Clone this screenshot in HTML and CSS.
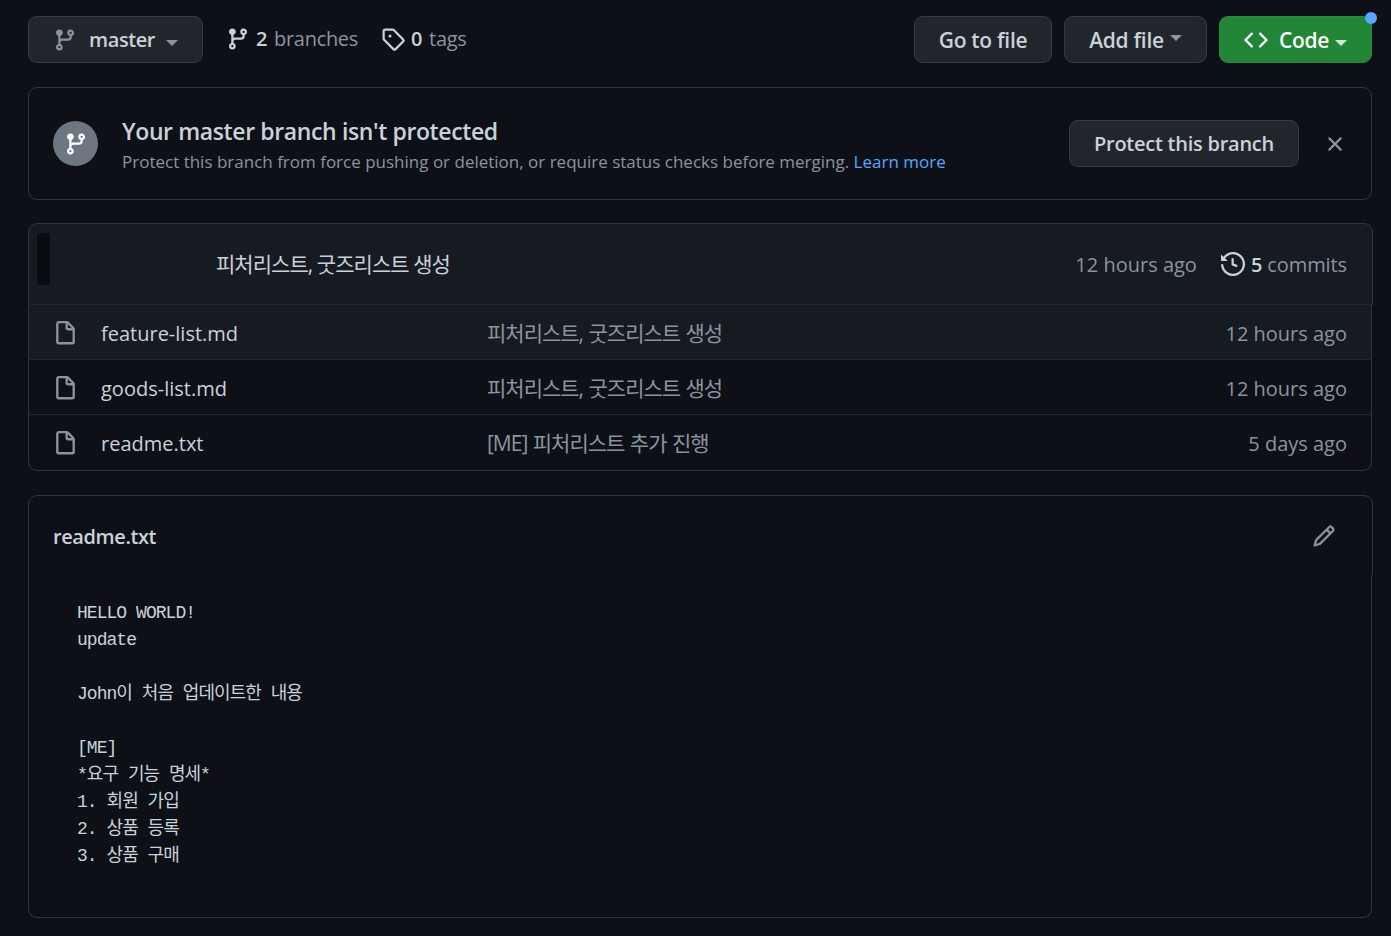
FILE: index.html
```html
<!DOCTYPE html>
<html lang="ko">
<head>
<meta charset="UTF-8">
<meta name="viewport" content="width=device-width, initial-scale=1.0">
<title>readme</title>
<link rel="stylesheet" href="styles.css">
</head>
<body>

<!-- ICONS -->
<svg class="defs">
    <symbol id="i-branch" viewBox="0 0 16 16"><path d="M11.75 2.5a.75.75 0 100 1.5.75.75 0 000-1.5zm-2.25.75a2.25 2.25 0 113 2.122V6A2.5 2.5 0 0110 8.5H6a1 1 0 00-1 1v1.128a2.251 2.251 0 11-1.5 0V5.372a2.25 2.25 0 111.5 0v1.836A2.492 2.492 0 016 7h4a1 1 0 001-1v-.628A2.25 2.25 0 019.5 3.25zM4.25 12a.75.75 0 100 1.5.75.75 0 000-1.5zM3.5 3.25a.75.75 0 111.5 0 .75.75 0 01-1.5 0z"/></symbol>
    <symbol id="i-file" viewBox="0 0 16 16"><path d="M3.75 1.5a.25.25 0 00-.25.25v11.5c0 .138.112.25.25.25h8.5a.25.25 0 00.25-.25V6H9.75A1.75 1.75 0 018 4.25V1.5H3.75zm5.75.56v2.19c0 .138.112.25.25.25h2.19L9.5 2.06zM2 1.75C2 .784 2.784 0 3.75 0h5.086c.464 0 .909.184 1.237.513l3.414 3.414c.329.328.513.773.513 1.237v8.086A1.75 1.75 0 0112.25 15h-8.5A1.75 1.75 0 012 13.25V1.75z"/></symbol>
</svg>

<!-- TOP BAR -->
<div class="topbar">
    <button class="btn btn-branch">
        <svg class="icon muted-icon"><use href="#i-branch"/></svg>
        <span>master</span>
        <i class="caret"></i>
    </button>
    <a class="meta-link">
        <svg class="icon light-icon"><use href="#i-branch"/></svg>
        <span><b>2</b> branches</span>
    </a>
    <a class="meta-link">
        <svg class="icon light-icon" viewBox="0 0 16 16"><path fill-rule="evenodd" d="M2.5 7.775V2.75a.25.25 0 01.25-.25h5.025a.25.25 0 01.177.073l6.25 6.25a.25.25 0 010 .354l-5.025 5.025a.25.25 0 01-.354 0l-6.25-6.25a.25.25 0 01-.073-.177zm-1.5 0V2.75C1 1.784 1.784 1 2.75 1h5.025c.464 0 .91.184 1.238.513l6.25 6.25a1.75 1.75 0 010 2.474l-5.026 5.026a1.75 1.75 0 01-2.474 0l-6.25-6.25A1.75 1.75 0 011 7.775zM6 5a1 1 0 100 2 1 1 0 000-2z"/></svg>
        <span><b>0</b> tags</span>
    </a>
    <div class="spacer"></div>
    <button class="btn btn-goto">Go to file</button>
    <button class="btn btn-add">Add file <i class="caret caret-up"></i></button>
    <button class="btn btn-code">
        <svg class="icon" viewBox="0 0 16 16"><path d="M4.72 3.22a.75.75 0 011.06 1.06L2.06 8l3.72 3.72a.75.75 0 11-1.06 1.06L.47 8.53a.75.75 0 010-1.06l4.25-4.25zm6.56 0a.75.75 0 10-1.06 1.06L13.94 8l-3.72 3.72a.75.75 0 101.06 1.06l4.25-4.25a.75.75 0 000-1.06l-4.25-4.25z"/></svg>
        <span>Code</span>
        <i class="caret"></i>
        <i class="dot"></i>
    </button>
</div>

<!-- BANNER -->
<div class="banner">
    <div class="avatar"><svg class="icon"><use href="#i-branch"/></svg></div>
    <div class="banner-text">
        <h2>Your master branch isn't protected</h2>
        <p>Protect this branch from force pushing or deletion, or require status checks before merging. <a>Learn more</a></p>
    </div>
    <button class="btn btn-protect">Protect this branch</button>
    <svg class="icon close" viewBox="0 0 16 16"><path d="M3.72 3.72a.75.75 0 011.06 0L8 6.94l3.22-3.22a.75.75 0 111.06 1.06L9.06 8l3.22 3.22a.75.75 0 11-1.06 1.06L8 9.06l-3.22 3.22a.75.75 0 01-1.06-1.06L6.94 8 3.72 4.78a.75.75 0 010-1.06z"/></svg>
</div>

<!-- FILES -->
<div class="files">
    <div class="files-head">
        <div class="redacted"></div>
        <div class="commit-msg">피처리스트, 굿즈리스트 생성</div>
        <div class="commit-age">12 hours ago</div>
        <a class="commit-count">
            <svg class="icon" viewBox="0 0 16 16"><path d="M1.643 3.143L.427 1.927A.25.25 0 000 2.104V5.75c0 .138.112.25.25.25h3.646a.25.25 0 00.177-.427L2.715 4.215a6.5 6.5 0 11-1.18 4.458.75.75 0 10-1.493.154 8.001 8.001 0 101.6-5.684zM7.75 4a.75.75 0 01.75.75v2.992l2.028.812a.75.75 0 01-.557 1.392l-2.5-1A.75.75 0 017 8.25v-3.5A.75.75 0 017.75 4z"/></svg>
            <span><b>5</b> commits</span>
        </a>
    </div>
    <div class="files-body">
        <div class="row row-hover">
            <svg class="icon file-icon"><use href="#i-file"/></svg>
            <div class="name">feature-list.md</div>
            <div class="msg">피처리스트, 굿즈리스트 생성</div>
            <div class="age">12 hours ago</div>
        </div>
        <div class="row">
            <svg class="icon file-icon"><use href="#i-file"/></svg>
            <div class="name">goods-list.md</div>
            <div class="msg">피처리스트, 굿즈리스트 생성</div>
            <div class="age">12 hours ago</div>
        </div>
        <div class="row">
            <svg class="icon file-icon"><use href="#i-file"/></svg>
            <div class="name">readme.txt</div>
            <div class="msg">[ME] 피처리스트 추가 진행</div>
            <div class="age">5 days ago</div>
        </div>
    </div>
</div>

<!-- README -->
<div class="readme">
    <div class="readme-head">
        <h3>readme.txt</h3>
        <svg class="icon pencil" viewBox="0 0 16 16"><path d="M11.013 1.427a1.75 1.75 0 012.474 0l1.086 1.086a1.75 1.75 0 010 2.474l-8.61 8.61c-.21.21-.47.364-.756.445l-3.251.93a.75.75 0 01-.927-.928l.929-3.25a1.75 1.75 0 01.445-.758l8.61-8.61zm1.414 1.06a.25.25 0 00-.354 0L10.811 3.75l1.439 1.44 1.263-1.263a.25.25 0 000-.354l-1.086-1.086zM11.189 6.25L9.75 4.81l-6.286 6.287a.25.25 0 00-.064.108l-.558 1.953 1.953-.558a.249.249 0 00.108-.064l6.286-6.286z"/></svg>
    </div>
    <div class="readme-body">
<pre>HELLO WORLD!
update

John이 처음 업데이트한 내용

[ME]
*요구 기능 명세*
1. 회원 가입
2. 상품 등록
3. 상품 구매</pre>
    </div>
</div>

</body>
</html>
```

FILE: styles.css
```css
:root {
    --bg: #0d1117;
    --card: #161b22;
    --btn: #21262d;
    --line: #30363d;
    --text: #c9d1d9;
    --muted: #8b949e;
    --blue: #58a6ff;
    --green: #238636;
}
* { box-sizing: border-box; }
body {
    margin: 0;
    padding: 16px 19px 0 28px;
    background: var(--bg);
    color: var(--text);
    font-family: "Open Sans", "Noto Sans CJK KR", sans-serif;
    font-size: 20px;
    line-height: 1.5;
}
.defs { display: none; }
.icon { width: 24px; height: 24px; fill: currentColor; flex: none; }
.muted-icon { color: var(--muted); }
.light-icon { color: var(--text); }
b { font-weight: 600; color: var(--text); }

/* buttons */
.btn {
    display: flex;
    align-items: center;
    justify-content: center;
    height: 47px;
    padding: 2px 24px 0;
    background: var(--btn);
    border: 1px solid #363b42;
    border-radius: 9px;
    color: var(--text);
    font: inherit;
    font-size: 21px;
    font-weight: 600;
    letter-spacing: -0.3px;
}
.caret {
    display: inline-block;
    width: 0;
    height: 0;
    border: 6px solid transparent;
    border-top-color: var(--muted);
    border-bottom: 0;
}
.caret-up { margin: 0 0 6px 6px; }

/* top bar */
.topbar { display: flex; align-items: center; }
.btn-branch { width: 175px; gap: 12px; padding: 0 24px; justify-content: flex-start; font-size: 20px; letter-spacing: -0.4px; }
.btn-branch .caret { margin: 6px 0 0 -1px; }
.meta-link { display: flex; align-items: center; gap: 6px; color: var(--muted); margin-left: 23px; margin-top: -1px; letter-spacing: -0.3px; word-spacing: 2px; }
.spacer { flex: 1; }
.btn-goto { width: 138px; padding: 2px 0 0; }
.btn-add { width: 143px; padding: 2px 0 0; margin-left: 12px; }
.btn-code {
    position: relative;
    width: 153px;
    padding: 2px 0 0;
    gap: 8px;
    margin-left: 12px;
    background: var(--green);
    border-color: #2a8a3d;
    color: #fff;
}
.btn-code .icon { margin-right: 3px; margin-top: -2px; }
.btn-code .caret { border-top-color: #d5e6d8; margin: 4px 0 0 -2px; }
.dot {
    position: absolute;
    top: -5px;
    right: -6px;
    width: 12px;
    height: 12px;
    border-radius: 50%;
    background: var(--blue);
}

/* banner */
.banner {
    display: flex;
    align-items: center;
    height: 113px;
    margin-top: 24px;
    padding: 0 24px;
    border: 1px solid var(--line);
    border-radius: 9px;
}
.avatar {
    display: flex;
    align-items: center;
    justify-content: center;
    width: 45px;
    height: 45px;
    margin-right: 24px;
    border-radius: 50%;
    background: #6e7681;
    color: #fff;
}
.banner-text { flex: 1; padding-top: 4px; }
.banner-text h2 { margin: 0; font-size: 23px; font-weight: 600; line-height: 30px; letter-spacing: -0.38px; }
.banner-text p { margin: 2px 0 0; font-size: 17px; line-height: 27px; color: var(--muted); }
.banner-text a { color: var(--blue); }
.btn-protect { width: 230px; padding: 0; margin-right: 24px; font-size: 20px; letter-spacing: -0.25px; }
.close { color: var(--muted); }

/* file list */
.files { margin-top: 23px; }
.files-head {
    display: flex;
    align-items: center;
    height: 82px;
    margin-right: -1px;
    padding: 0 25px 0 8px;
    background: var(--card);
    border: 1px solid var(--line);
    border-bottom-color: var(--btn);
    border-radius: 9px 9px 0 0;
}
.redacted { align-self: flex-start; width: 13px; height: 52px; margin: 9px 166px 0 0; background: #090c10; }
.commit-msg { flex: 1; font-size: 21px; letter-spacing: -0.95px; margin-top: 2px; }
.commit-age { color: var(--muted); margin-right: 24px; margin-top: 1px; }
.commit-count { display: flex; align-items: center; gap: 6px; color: var(--muted); letter-spacing: -0.1px; }
.commit-count span { margin-top: 1px; }
.commit-count .icon { color: var(--text); }
.files-body {
    border: 1px solid var(--line);
    border-top: 0;
    border-radius: 0 0 9px 9px;
    overflow: hidden;
}
.row {
    display: flex;
    align-items: center;
    height: 55px;
    padding: 0 24px;
    border-bottom: 1px solid var(--btn);
}
.row:last-child { border-bottom: 0; }
.row-hover { background: var(--card); }
.file-icon { color: var(--muted); width: 25px; height: 25px; margin-top: 2px; margin-right: 23px; }
.name { width: 386px; margin-top: 3px; }
.msg { flex: 1; color: var(--muted); font-size: 21px; letter-spacing: -1px; word-spacing: 1px; margin-top: 3px; }
.age { color: var(--muted); margin-top: 3px; }

/* readme */
.readme { margin-top: 24px; }
.readme-head {
    display: flex;
    align-items: center;
    justify-content: space-between;
    height: 80px;
    margin-right: -1px;
    padding: 0 36px 0 24px;
    border: 1px solid var(--line);
    border-bottom: 0;
    border-radius: 9px 9px 0 0;
}
.readme-head h3 { margin: 2px 0 0; font-size: 20px; font-weight: 600; letter-spacing: -0.4px; }
.pencil { color: var(--muted); }
.readme-body {
    height: 343px;
    padding: 25px 48px 0;
    border: 1px solid var(--line);
    border-top: 0;
    border-radius: 0 0 9px 9px;
}
pre {
    margin: 0;
    font-family: "Liberation Mono", "Noto Sans CJK KR", monospace;
    font-size: 18px;
    line-height: 27px;
    letter-spacing: -0.96px;
}
```
